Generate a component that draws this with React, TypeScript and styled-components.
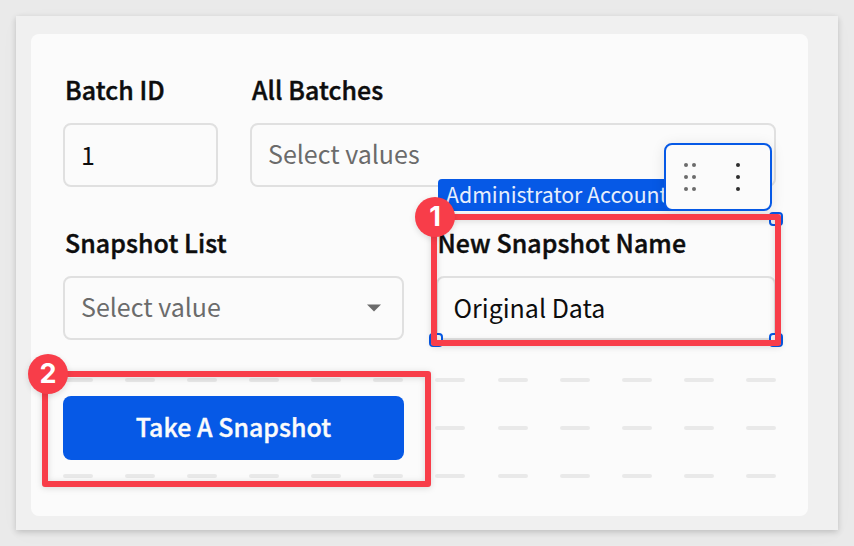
import React from "react";
import styled, { createGlobalStyle, css } from "styled-components";

const BLUE = "#0659e6";
const RED = "#f83d49";
const SANS = `"Noto Sans CJK JP", "Noto Sans CJK SC", "Open Sans", sans-serif`;

const GlobalStyle = createGlobalStyle`
  * { box-sizing: border-box; }
  html, body { margin: 0; height: 100%; overflow: hidden; }
  body { background: #eaeaea; font-family: ${SANS}; }
`;

const Page = styled.main`
  position: relative;
  width: 854px;
  height: 546px;
  padding: 16px;
  background: #eaeaea;
`;

const Frame = styled.section`
  width: 822px;
  height: 514px;
  padding: 18px 30px 14px 15px;
  background: #f0f0f0;
  box-shadow: 0 2px 6px rgba(0, 0, 0, 0.18), 0 4px 24px rgba(0, 0, 0, 0.02);
`;

const Panel = styled.div`
  display: flex;
  flex-direction: column;
  width: 777px;
  height: 482px;
  padding: 37px 32px 0;
  border-radius: 8px;
  background: #fbfbfb;
`;

const FormRow = styled.div`
  display: flex;
  gap: 32px;
  height: 153px;
`;

const Field = styled.label<{ $width: number }>`
  display: flex;
  flex-direction: column;
  width: ${(p) => p.$width}px;
`;

const FieldName = styled.span`
  height: 52px;
  padding-left: 2px;
  font-size: 24.9px;
  line-height: 36px;
  font-weight: 500;
  letter-spacing: 0.1px;
  -webkit-text-stroke: 0.45px #0d0d0d;
  color: #0d0d0d;
  white-space: nowrap;
`;

const Control = styled.span<{ $muted?: boolean }>`
  display: flex;
  align-items: center;
  justify-content: space-between;
  height: 64px;
  padding: 0 21px ${(p) => (p.$muted ? 4 : 2)}px 16px;
  border: 2px solid #e0e0e0;
  border-radius: 8px;
  font-size: 25px;
  line-height: 40px;
  color: ${(p) => (p.$muted ? "#6b6b6b" : "#0d0d0d")};
  white-space: nowrap;
`;

const Caret = styled.svg`
  display: block;
  width: 14px;
  height: 8px;
  margin-top: 4px;
  fill: #6b6b6b;
`;

const SlotArea = styled.div`
  display: flex;
  flex-direction: column;
  gap: 44px;
  padding-top: 1px;
`;

const SlotRow = styled.div`
  display: flex;
  justify-content: space-between;
  width: 713px;
  height: 4px;
`;

const Slot = styled.span<{ $hidden?: boolean }>`
  width: 30px;
  height: 4px;
  border-radius: 2px;
  background: ${(p) => (p.$hidden ? "transparent" : "#e9e9e9")};
`;

const SnapshotButton = styled.button`
  position: absolute;
  left: 63px;
  top: 396px;
  width: 341px;
  height: 64px;
  padding: 0 0 4px;
  border: 0;
  border-radius: 8px;
  background: ${BLUE};
  color: #fbfbfb;
  font: 500 24.9px/40px ${SANS};
  letter-spacing: 0.05px;
  -webkit-text-stroke: 0.4px #fbfbfb;
`;

const Tag = styled.div`
  position: absolute;
  left: 438px;
  top: 179px;
  width: 240px;
  height: 32px;
  padding-left: 8px;
  border-radius: 4px 0 0 0;
  background: ${BLUE};
  color: #e6eefc;
  font-size: 21.3px;
  line-height: 29px;
  white-space: nowrap;
  overflow: hidden;
`;

const Toolbar = styled.div`
  position: absolute;
  left: 664px;
  top: 143px;
  display: flex;
  align-items: center;
  gap: 40px;
  width: 108px;
  height: 68px;
  padding-left: 20px;
  border: 2px solid ${BLUE};
  border-radius: 8px;
  background: #fbfbfb;
  box-shadow: 0 2px 14px rgba(0, 0, 0, 0.1);
`;

const Dots = styled.svg<{ $color: string }>`
  display: block;
  height: 28px;
  margin-left: -2px;
  margin-right: 2px;
  fill: ${(p) => p.$color};
`;

const corners = {
  tr: css`left: 769px; top: 212px;`,
  bl: css`left: 429px; top: 333px;`,
  br: css`left: 769px; top: 333px;`,
};

const Handle = styled.span<{ $corner: keyof typeof corners }>`
  position: absolute;
  ${(p) => corners[p.$corner]}
  width: 14px;
  height: 14px;
  border: 2px solid ${BLUE};
  border-radius: 4px;
  background: #fbfbfb;
`;

const Callout = styled.div<{ $x: number; $y: number; $w: number; $h: number }>`
  position: absolute;
  left: ${(p) => p.$x}px;
  top: ${(p) => p.$y}px;
  width: ${(p) => p.$w}px;
  height: ${(p) => p.$h}px;
  border: 6px solid ${RED};
  border-radius: 3px;
  filter: drop-shadow(0 1px 3px rgba(0, 0, 0, 0.14));
`;

const Badge = styled.span<{ $x: number; $y: number }>`
  position: absolute;
  left: ${(p) => p.$x}px;
  top: ${(p) => p.$y}px;
  display: flex;
  align-items: center;
  justify-content: center;
  width: 40px;
  height: 40px;
  border-radius: 50%;
  background: ${RED};
  color: #fff;
  font: 700 27px/40px Inter, "Liberation Sans", sans-serif;
  box-shadow: 0 2px 6px rgba(0, 0, 0, 0.12);
`;

const columns = Array.from({ length: 12 }, (_, i) => i);

export default function App() {
  return (
    <>
      <GlobalStyle />
      <Page>
        <Frame>
          <Panel>
            <FormRow>
              <Field $width={155}>
                <FieldName>Batch ID</FieldName>
                <Control>1</Control>
              </Field>
              <Field $width={526}>
                <FieldName>All Batches</FieldName>
                <Control $muted>Select values</Control>
              </Field>
            </FormRow>
            <FormRow>
              <Field $width={341}>
                <FieldName>Snapshot List</FieldName>
                <Control $muted>
                  Select value
                  <Caret viewBox="0 0 14 8"><path d="M0 0.5h14L7 7.5z" /></Caret>
                </Control>
              </Field>
              <Field $width={341}>
                <FieldName>New Snapshot Name</FieldName>
                <Control>Original Data</Control>
              </Field>
            </FormRow>
            <SlotArea>
              {[0, 1, 2].map((row) => (
                <SlotRow key={row}>
                  {columns.map((c) => (
                    <Slot key={c} $hidden={row === 1 && c < 6} />
                  ))}
                </SlotRow>
              ))}
            </SlotArea>
          </Panel>
        </Frame>
        <SnapshotButton>Take A Snapshot</SnapshotButton>
        <Tag>Administrator Account</Tag>
        <Toolbar>
          <Dots $color="#6b6b6b" width="12" viewBox="0 0 12 28">
            {[2, 14, 26].map((y) => (
              <React.Fragment key={y}>
                <circle cx="2" cy={y} r="2" />
                <circle cx="10" cy={y} r="2" />
              </React.Fragment>
            ))}
          </Dots>
          <Dots $color="#2e2e2e" width="4" viewBox="0 0 4 28">
            {[2, 14, 26].map((y) => (
              <circle key={y} cx="2" cy={y} r="2" />
            ))}
          </Dots>
        </Toolbar>
        <Handle $corner="tr" />
        <Handle $corner="bl" />
        <Handle $corner="br" />
        <Callout $x={430.5} $y={213.5} $w={350.5} $h={132.5} />
        <Callout $x={42} $y={371} $w={389} $h={116} />
        <Badge $x={415} $y={197}>1</Badge>
        <Badge $x={28} $y={354}>2</Badge>
      </Page>
    </>
  );
}
